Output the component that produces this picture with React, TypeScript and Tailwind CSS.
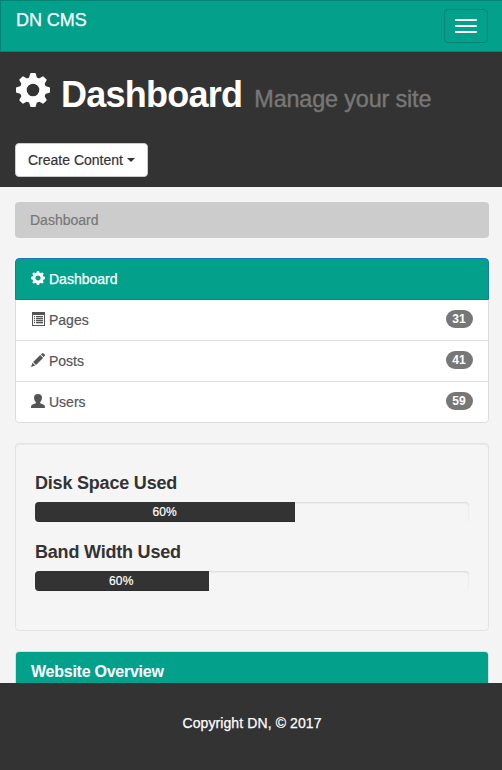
import React from "react";

const TOOTH = "M-1.9 -17 H1.9 Q2.6 -17 2.8 -16.3 L4 -12 L5 -8 H-5 L-4 -12 L-2.8 -16.3 Q-2.6 -17 -1.9 -17 Z";

function Cog({ className }: { className: string }) {
  return (
    <svg viewBox="-17 -17 34 34" className={className} fill="currentColor">
      {[0, 45, 90, 135, 180, 225, 270, 315].map((a) => (
        <path key={a} d={TOOTH} transform={`rotate(${a})`} strokeLinejoin="round" />
      ))}
      <circle r="9.7" fill="none" stroke="currentColor" strokeWidth="6.8" />
    </svg>
  );
}

function ListAlt() {
  return (
    <svg viewBox="0 0 14 14" className="h-3.5 w-3.5" fill="currentColor">
      <path fillRule="evenodd" d="M1 0h13v14H1zM2 3v10h11V3z" />
      <path d="M3 4h1v1H3zM3 6h1v1H3zM3 8h1v1H3zM3 10h1v1H3zM5 4h7v1H5zM5 6h7v1H5zM5 8h7v1H5zM5 10h7v1H5z" />
      <path opacity="0.35" d="M3 5h1v1H3zM3 7h1v1H3zM3 9h1v1H3zM3 11h1v1H3zM5 5h7v1H5zM5 7h7v1H5zM5 9h7v1H5zM5 11h7v1H5z" />
    </svg>
  );
}

function Pencil() {
  return (
    <svg viewBox="0 0 14 14" className="h-3.5 w-3.5" fill="currentColor">
      <path d="M9.9 1.5 11 .4Q11.8-.3 12.5.4L13.7 1.6Q14.4 2.3 13.7 3L12.6 4.1ZM9.2 2 12.1 4.9 5 12 2.1 9.1ZM1.5 9.8 4.3 12.6 0 14Z" />
    </svg>
  );
}

function User() {
  return (
    <svg viewBox="0 0 14 14" className="h-3.5 w-3.5" fill="currentColor">
      <path d="M7 0C9.8 0 11 1.5 11 3.6C11 5.6 10.2 7.1 9.2 8.1V9C9.2 9.7 13 10.3 13.6 11.4Q14 12.2 14 14H0Q0 12.2.4 11.4C1 10.3 4.8 9.7 4.8 9V8.1C3.8 7.1 3 5.6 3 3.6C3 1.5 4.2 0 7 0Z" />
    </svg>
  );
}

const links = [
  { label: "Pages", count: 31, icon: <ListAlt /> },
  { label: "Posts", count: 41, icon: <Pencil /> },
  { label: "Users", count: 59, icon: <User /> },
];

function Usage({ title, width }: { title: string; width: string }) {
  return (
    <>
      <h4 className="mt-[11px] mb-[9px] text-[18px] leading-[19px] font-bold tracking-[-0.2px]">{title}</h4>
      <div className="mb-[21px] h-5 overflow-hidden rounded bg-[#f5f5f5] shadow-[inset_0_1px_2px_rgba(0,0,0,0.12)]">
        <div
          className="h-full bg-[#333] pr-px text-center text-[12px] leading-5 tracking-[0.2px] text-white shadow-[inset_0_-1px_0_rgba(0,0,0,0.15)] [-webkit-text-stroke:0.2px_white]"
          style={{ width }}
        >
          60%
        </div>
      </div>
    </>
  );
}

export default function App() {
  return (
    <div className="h-[770px] w-full overflow-hidden bg-[#f4f4f4] font-['Liberation_Sans',Arial,sans-serif] text-[14px] leading-5 text-[#333]">
      <div className="flex h-full w-[504px] flex-col">
        <nav className="flex h-[52px] shrink-0 items-start justify-between border border-[#038373] bg-[#03a18c] pr-[15px] pl-[15px]">
          <span className="pt-[9px] text-[18px] leading-5 tracking-[-0.05px] text-white [-webkit-text-stroke:0.25px_white]">DN CMS</span>
          <button className="mt-2 flex h-[34px] w-11 flex-col items-center justify-center gap-1 rounded border border-[#038373]">
            <span className="h-0.5 w-[22px] rounded-[1px] bg-white" />
            <span className="h-0.5 w-[22px] rounded-[1px] bg-white" />
            <span className="h-0.5 w-[22px] rounded-[1px] bg-white" />
          </button>
        </nav>

        <header className="h-[135px] shrink-0 bg-[#333] px-[15px] text-white">
          <h1 className="flex h-[91px] items-baseline whitespace-nowrap pt-[21px] text-[36px] leading-[44px]">
            <Cog className="ml-px h-[34px] w-[34px] shrink-0" />
            <span className="ml-[11px] font-bold tracking-[-0.75px]">Dashboard</span>
            <small className="ml-3 text-[23.4px] tracking-[-0.15px] text-[#777] [-webkit-text-stroke:0.4px_#777]">Manage your site</small>
          </h1>
          <button className="flex h-[34px] w-[133px] items-center rounded border border-[#ccc] bg-white pl-3 text-[#333] [-webkit-text-stroke:0.2px_#333]">
            Create Content
            <span className="ml-1 border-x-4 border-t-4 border-x-transparent border-t-[#333]" />
          </button>
        </header>

        <main className="min-h-0 flex-1 overflow-hidden px-[15px] pt-[15px]">
          <ol className="mb-5 h-9 rounded bg-[#ccc] px-[15px] py-2 text-[#777] [-webkit-text-stroke:0.2px_#777]">
            <li>Dashboard</li>
          </ol>

          <div className="mb-5 overflow-hidden rounded">
            <a className="flex h-[42px] items-center gap-1 rounded-t border border-[#1b76b8] bg-[#03a18c] px-[15px] text-white [-webkit-text-stroke:0.25px_white]">
              <Cog className="h-3.5 w-3.5 -translate-y-px" />
              <span>Dashboard</span>
            </a>
            {links.map((l) => (
              <a
                key={l.label}
                className="flex h-[41px] items-center border-x border-b border-[#ddd] bg-white px-[15px] text-[#555] last:rounded-b [-webkit-text-stroke:0.2px_#555]"
              >
                <span className="-translate-y-px">{l.icon}</span>
                <span className="ml-1 flex-1">{l.label}</span>
                <span className="mb-[3px] h-[18px] w-[27px] rounded-[10px] bg-[#777] pr-px text-center text-[12px] leading-[18px] font-bold text-white [-webkit-text-stroke:0]">
                  {l.count}
                </span>
              </a>
            ))}
          </div>

          <section className="mb-5 h-[188px] rounded border border-[#e3e3e3] bg-[#f5f5f5] px-[19px] pt-[19px] shadow-[inset_0_1px_1px_rgba(0,0,0,0.05)]">
            <Usage title="Disk Space Used" width="60%" />
            <Usage title="Band Width Used" width="40%" />
          </section>

          <section className="h-[100px] rounded border border-[#ddd] bg-white">
            <h3 className="h-10 rounded-t-[3px] bg-[#03a18c] px-[15px] pt-[11px] text-[16px] leading-[18px] font-bold tracking-[-0.25px] text-white">
              Website Overview
            </h3>
          </section>
        </main>

        <footer className="h-[87px] shrink-0 bg-[#333] pt-[30px] text-center tracking-[0.1px] text-white [-webkit-text-stroke:0.25px_white]">
          Copyright DN, © 2017
        </footer>
      </div>
    </div>
  );
}
